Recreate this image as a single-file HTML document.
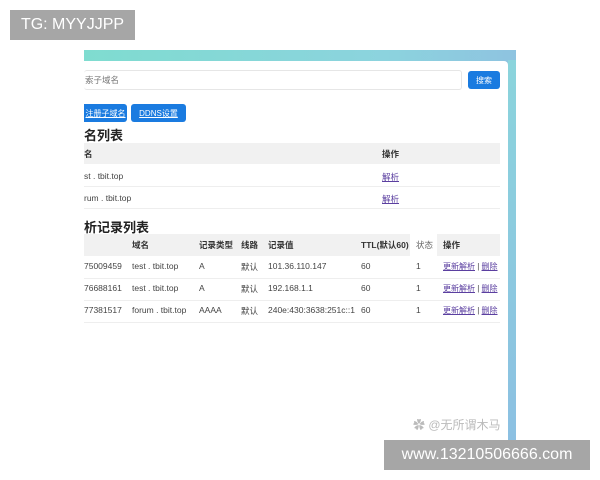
<!DOCTYPE html>
<html><head><meta charset="utf-8"><style>
*{margin:0;padding:0;box-sizing:border-box}
body{width:600px;height:480px;background:#fff;position:relative;overflow:hidden;font-family:"Liberation Sans","Noto Sans CJK SC",sans-serif;color:#444}
.abs{position:absolute}
.tag{background:#a6a6a6;color:#fff;font-size:16px;display:flex;align-items:center;justify-content:center}
.t{font-size:8.5px;white-space:nowrap}
a{color:#5b3fa0;text-decoration:underline}
.btn{background:#1a7be0;border-radius:3px;color:#fff;font-size:8px;display:flex;align-items:center;justify-content:center}
</style></head><body>
<div class="abs" style="left:84px;top:50px;width:432px;height:395px;background:linear-gradient(90deg,#7fdcd0,#8cd3de 70%,#8ec3e0)"></div>
<div class="abs" style="left:508px;top:60px;width:8px;height:385px;background:linear-gradient(180deg,#8bd4dc,#8cc0e2)"></div>
<div class="abs" style="left:84px;top:61px;width:424px;height:385px;background:#fff;border-top-right-radius:4px"></div>

<div class="abs" style="left:84px;top:70px;width:378px;height:20px;border:1px solid #e6e6e6;border-left:none;border-radius:3px"></div>
<div class="abs t" style="left:85px;top:74px;color:#777">索子域名</div>
<div class="abs btn" style="left:468px;top:71px;width:32px;height:18px">搜索</div>

<div class="abs btn" style="left:84px;top:104px;width:43px;height:18px;border-radius:0 3px 3px 0"><span style="text-decoration:underline">注册子域名</span></div>
<div class="abs btn" style="left:131px;top:104px;width:55px;height:18px"><span style="text-decoration:underline">DDNS设置</span></div>

<div class="abs" style="left:84px;top:125px;font-size:13px;font-weight:bold;color:#222">名列表</div>
<div class="abs" style="left:84px;top:143px;width:416px;height:21px;background:#f1f1f1"></div>
<div class="abs t" style="left:84px;top:148px;font-weight:bold;color:#333">名</div>
<div class="abs t" style="left:382px;top:148px;font-weight:bold;color:#333">操作</div>
<div class="abs t" style="left:84px;top:171px">st . tbit.top</div>
<div class="abs t" style="left:382px;top:171px"><a>解析</a></div>
<div class="abs" style="left:84px;top:186px;width:416px;height:1px;background:#eee"></div>
<div class="abs t" style="left:84px;top:193px">rum . tbit.top</div>
<div class="abs t" style="left:382px;top:193px"><a>解析</a></div>
<div class="abs" style="left:84px;top:208px;width:416px;height:1px;background:#eee"></div>

<div class="abs" style="left:84px;top:217px;font-size:13px;font-weight:bold;color:#222">析记录列表</div>
<div class="abs" style="left:84px;top:234px;width:326px;height:22px;background:#f1f1f1"></div>
<div class="abs" style="left:437px;top:234px;width:63px;height:22px;background:#f1f1f1"></div>
<div class="abs t" style="left:132px;top:239px;font-weight:bold;color:#333">域名</div>
<div class="abs t" style="left:199px;top:239px;font-weight:bold;color:#333">记录类型</div>
<div class="abs t" style="left:241px;top:239px;font-weight:bold;color:#333">线路</div>
<div class="abs t" style="left:268px;top:239px;font-weight:bold;color:#333">记录值</div>
<div class="abs t" style="left:361px;top:239px;font-weight:bold;color:#333">TTL(默认60)</div>
<div class="abs t" style="left:416px;top:239px;color:#666">状态</div>
<div class="abs t" style="left:443px;top:239px;font-weight:bold;color:#333">操作</div>

<div class="abs t" style="left:84px;top:261px">75009459</div>
<div class="abs t" style="left:132px;top:261px">test . tbit.top</div>
<div class="abs t" style="left:199px;top:261px">A</div>
<div class="abs t" style="left:241px;top:261px">默认</div>
<div class="abs t" style="left:268px;top:261px">101.36.110.147</div>
<div class="abs t" style="left:361px;top:261px">60</div>
<div class="abs t" style="left:416px;top:261px">1</div>
<div class="abs t" style="left:443px;top:261px;font-size:8px"><a>更新解析</a> | <a>删除</a></div>
<div class="abs" style="left:84px;top:278px;width:416px;height:1px;background:#eee"></div>

<div class="abs t" style="left:84px;top:283px">76688161</div>
<div class="abs t" style="left:132px;top:283px">test . tbit.top</div>
<div class="abs t" style="left:199px;top:283px">A</div>
<div class="abs t" style="left:241px;top:283px">默认</div>
<div class="abs t" style="left:268px;top:283px">192.168.1.1</div>
<div class="abs t" style="left:361px;top:283px">60</div>
<div class="abs t" style="left:416px;top:283px">1</div>
<div class="abs t" style="left:443px;top:283px;font-size:8px"><a>更新解析</a> | <a>删除</a></div>
<div class="abs" style="left:84px;top:300px;width:416px;height:1px;background:#eee"></div>

<div class="abs t" style="left:84px;top:305px">77381517</div>
<div class="abs t" style="left:132px;top:305px">forum . tbit.top</div>
<div class="abs t" style="left:199px;top:305px">AAAA</div>
<div class="abs t" style="left:241px;top:305px">默认</div>
<div class="abs t" style="left:268px;top:305px">240e:430:3638:251c::1</div>
<div class="abs t" style="left:361px;top:305px">60</div>
<div class="abs t" style="left:416px;top:305px">1</div>
<div class="abs t" style="left:443px;top:305px;font-size:8px"><a>更新解析</a> | <a>删除</a></div>
<div class="abs" style="left:84px;top:322px;width:416px;height:1px;background:#eee"></div>

<div class="abs" style="left:413px;top:416px;font-size:12px;color:#bbb">✿ @无所谓木马</div>

<div class="abs tag" style="left:10px;top:10px;width:125px;height:30px">TG: MYYJJPP</div>
<div class="abs tag" style="left:384px;top:440px;width:206px;height:30px">www.13210506666.com</div>
</body></html>
